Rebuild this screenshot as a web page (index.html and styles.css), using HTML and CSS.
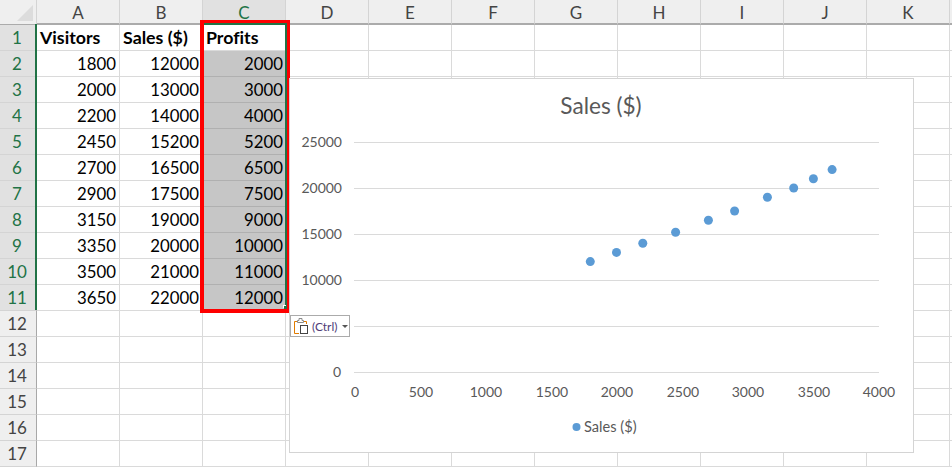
FILE: index.html
```html
<!DOCTYPE html>
<html lang="en">
<head>
<meta charset="utf-8">
<title>Sales sheet</title>
<link rel="stylesheet" href="styles.css">
</head>
<body>
<div class="sheet">
  <div class="corner"><span class="corner-mark"></span></div>
  <div class="col-head">A</div><div class="col-head">B</div><div class="col-head active">C</div><div class="col-head">D</div><div class="col-head">E</div><div class="col-head">F</div><div class="col-head">G</div><div class="col-head">H</div><div class="col-head">I</div><div class="col-head">J</div><div class="col-head">K</div><div class="col-head tail"></div>

  <div class="row-head active">1</div><div class="cell bold">Visitors</div><div class="cell bold">Sales ($)</div><div class="cell bold">Profits</div><div class="rest"></div>
  <div class="row-head active">2</div><div class="cell num">1800</div><div class="cell num">12000</div><div class="cell num sel">2000</div><div class="rest"></div>
  <div class="row-head active">3</div><div class="cell num">2000</div><div class="cell num">13000</div><div class="cell num sel">3000</div><div class="rest"></div>
  <div class="row-head active">4</div><div class="cell num">2200</div><div class="cell num">14000</div><div class="cell num sel">4000</div><div class="rest"></div>
  <div class="row-head active">5</div><div class="cell num">2450</div><div class="cell num">15200</div><div class="cell num sel">5200</div><div class="rest"></div>
  <div class="row-head active">6</div><div class="cell num">2700</div><div class="cell num">16500</div><div class="cell num sel">6500</div><div class="rest"></div>
  <div class="row-head active">7</div><div class="cell num">2900</div><div class="cell num">17500</div><div class="cell num sel">7500</div><div class="rest"></div>
  <div class="row-head active">8</div><div class="cell num">3150</div><div class="cell num">19000</div><div class="cell num sel">9000</div><div class="rest"></div>
  <div class="row-head active">9</div><div class="cell num">3350</div><div class="cell num">20000</div><div class="cell num sel">10000</div><div class="rest"></div>
  <div class="row-head active">10</div><div class="cell num">3500</div><div class="cell num">21000</div><div class="cell num sel">11000</div><div class="rest"></div>
  <div class="row-head active">11</div><div class="cell num">3650</div><div class="cell num">22000</div><div class="cell num sel">12000</div><div class="rest"></div>
  <div class="row-head">12</div><div class="rest wide"></div>
  <div class="row-head">13</div><div class="rest wide"></div>
  <div class="row-head">14</div><div class="rest wide"></div>
  <div class="row-head">15</div><div class="rest wide"></div>
  <div class="row-head">16</div><div class="rest wide"></div>
  <div class="row-head">17</div><div class="rest wide"></div>

  <div class="green-left"></div>
  <div class="green-box"><span class="fill-handle"></span></div>
  <div class="red-box"></div>

  <svg class="chart" width="625" height="375" viewBox="289 78 625 375">
    <rect class="chart-bg" x="289.5" y="78.5" width="624" height="374"/>
    <text class="chart-title" x="601" y="114" text-anchor="middle">Sales ($)</text>
    <g class="grid-lines">
      <path d="M354 142.5H879M354 188.5H879M354 234.5H879M354 280.5H879M354 326.5H879M354 372.5H879"/>
    </g>
    <g class="axis" text-anchor="end">
      <text x="342" y="147">25000</text>
      <text x="342" y="193">20000</text>
      <text x="342" y="239">15000</text>
      <text x="342" y="285">10000</text>
      <text x="341" y="377">0</text>
    </g>
    <g class="axis" text-anchor="middle">
      <text x="355" y="397">0</text>
      <text x="421" y="397">500</text>
      <text x="486" y="397">1000</text>
      <text x="552" y="397">1500</text>
      <text x="617" y="397">2000</text>
      <text x="683" y="397">2500</text>
      <text x="748" y="397">3000</text>
      <text x="814" y="397">3500</text>
      <text x="879" y="397">4000</text>
    </g>
    <g class="points">
      <circle cx="590.3" cy="261.6" r="4.5"/>
      <circle cx="616.5" cy="252.4" r="4.5"/>
      <circle cx="642.8" cy="243.2" r="4.5"/>
      <circle cx="675.6" cy="232.3" r="4.5"/>
      <circle cx="708.4" cy="220.2" r="4.5"/>
      <circle cx="734.6" cy="211" r="4.5"/>
      <circle cx="767.4" cy="197.2" r="4.5"/>
      <circle cx="793.7" cy="188" r="4.5"/>
      <circle cx="813.4" cy="178.8" r="4.5"/>
      <circle cx="832.1" cy="169.6" r="4.5"/>
      <circle cx="576.5" cy="427" r="4"/>
    </g>
    <text class="legend" x="584" y="432">Sales ($)</text>
  </svg>

  <div class="paste">
    <svg class="paste-icon" width="15" height="16" viewBox="0 0 15 16">
      <path class="clip" d="M3 3.500H.5V15.500H5M10 3.500H12.500V6"/>
      <path class="clip-top" d="M3.500 4.500V2.500H5V.5H8V2.500H9.500V4.500Z"/>
      <rect class="sheet-icon" x="6.500" y="7.500" width="7" height="8"/>
    </svg>
    <span class="paste-label">(Ctrl)</span>
    <span class="caret"></span>
  </div>
</div>
</body>
</html>
```
FILE: styles.css
```css
html, body {
  margin: 0;
  padding: 0;
  width: 952px;
  height: 468px;
  overflow: hidden;
  background: #fff;
}

.sheet {
  position: relative;
  width: 952px;
  height: 468px;
  overflow: hidden;
  display: grid;
  grid-template-columns: 37px repeat(11, 83px) 1fr;
  grid-template-rows: 25px repeat(17, 26px) 1fr;
  font-family: Lato, "Liberation Sans", sans-serif;
  font-variant-ligatures: none;
  color: #000;
}

.corner {
  background: #efefef;
  border-right: 1px solid #d4d4d4;
  border-bottom: 1px solid #ababab;
  box-sizing: border-box;
  position: relative;
}

.corner-mark {
  position: absolute;
  right: 3px;
  bottom: 3px;
  width: 0;
  height: 0;
  border-left: 16px solid transparent;
  border-bottom: 16px solid #dcdcdc;
}

.col-head {
  box-sizing: border-box;
  background: #efefef;
  border-right: 1px solid #d4d4d4;
  border-bottom: 2px solid #ababab;
  margin-bottom: -1px;
  height: 25px;
  display: flex;
  align-items: center;
  justify-content: center;
  font-size: 17px;
  color: #444;
  padding-top: 2px;
}

.col-head.active {
  background: #e1e1e1;
  color: #217346;
}

.col-head.tail { border-right: 0; }

.row-head {
  box-sizing: border-box;
  background: #efefef;
  border-right: 1px solid #a8a8a8;
  border-bottom: 1px solid #d4d4d4;
  display: flex;
  align-items: center;
  justify-content: center;
  font-size: 17px;
  color: #444;
  padding-right: 2px;
}

.row-head.active {
  background: #e1e1e1;
  color: #217346;
}

.cell {
  box-sizing: border-box;
  border-right: 1px solid #dadada;
  border-bottom: 1px solid #dadada;
  display: flex;
  align-items: center;
  font-size: 16.800px;
  padding: 0 3px 0 3px;
  white-space: nowrap;
}

.bold {
  font-weight: 700;
  font-size: 17.800px;
  padding-bottom: 2px;
}

.num { justify-content: flex-end; }

.sel {
  background: #c6c6c6;
  border-bottom-color: #b0b0b0;
  border-right-color: #fff;
  padding-right: 2px;
}

.rest {
  grid-column: 5 / -1;
  box-sizing: border-box;
  border-bottom: 1px solid #dadada;
  background-image: repeating-linear-gradient(to right, transparent 0, transparent 82px, #dadada 82px, #dadada 83px);
}

.rest.wide { grid-column: 2 / -1; }

.green-left {
  position: absolute;
  left: 35px;
  top: 24px;
  width: 2px;
  height: 286px;
  background: #217346;
}

.green-box {
  position: absolute;
  left: 203px;
  top: 23px;
  width: 84px;
  height: 286px;
  box-sizing: border-box;
  border-top: 2px solid #217346;
  border-right: 2px solid #217346;
}

.fill-handle {
  position: absolute;
  right: -2px;
  bottom: 0;
  width: 3px;
  height: 3px;
  background: #217346;
  box-shadow: -1px -1px 0 #fff;
}

.red-box {
  position: absolute;
  left: 200px;
  top: 20px;
  width: 90px;
  height: 293px;
  box-sizing: border-box;
  border-style: solid;
  border-color: #fe0000;
  border-width: 3px 3px 4px 4px;
}

.chart {
  position: absolute;
  left: 289px;
  top: 78px;
}

.chart-bg {
  fill: #fff;
  stroke: #d4d4d4;
}

.chart-title {
  font-size: 22.600px;
  fill: #595959;
}

.grid-lines path {
  fill: none;
  stroke: #dadada;
}

.axis text {
  font-size: 14px;
  fill: #595959;
}

.points circle { fill: #5b9bd5; }

.legend {
  font-size: 14.600px;
  fill: #595959;
}

.paste {
  position: absolute;
  left: 290px;
  top: 315px;
  width: 60px;
  height: 22px;
  box-sizing: border-box;
  border: 1px solid #ababab;
  background: #fff;
  display: flex;
  align-items: center;
  padding-left: 3px;
  gap: 3px;
}

.paste-icon { flex: none; }

.clip { fill: none; stroke: #e07b00; }
.clip-top { fill: #fff; stroke: #8a8a8a; }
.sheet-icon { fill: #fff; stroke: #444; }

.paste-label {
  font-size: 12px;
  color: #4f3d78;
}

.caret {
  width: 0;
  height: 0;
  border-left: 3px solid transparent;
  border-right: 3px solid transparent;
  border-top: 3px solid #555;
  margin-left: 1px;
}
```
